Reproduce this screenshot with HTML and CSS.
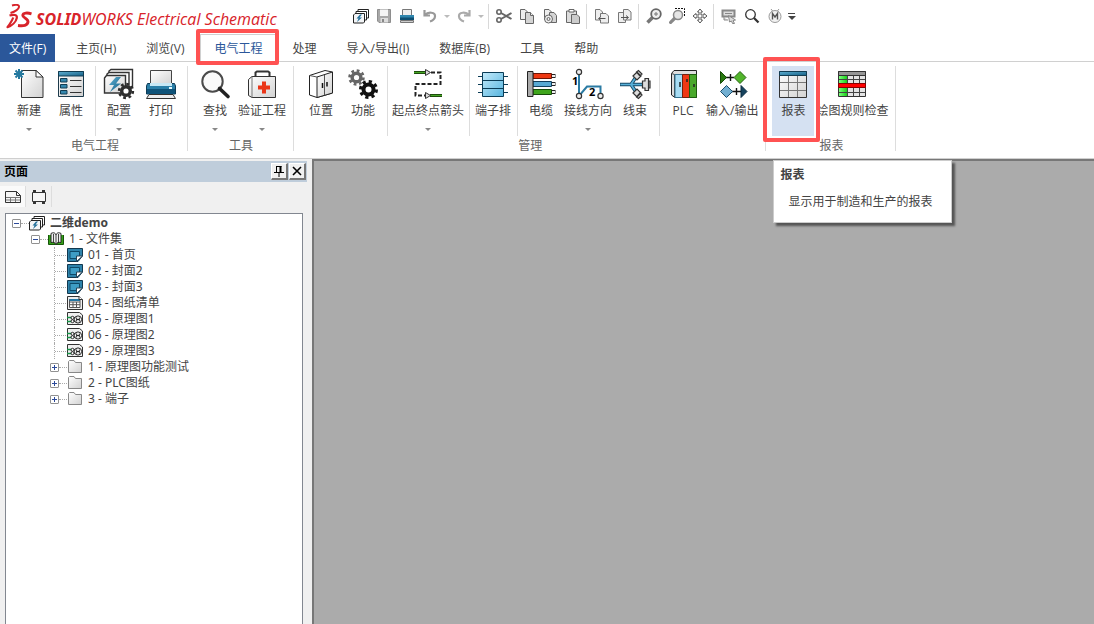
FILE: index.html
```
<!DOCTYPE html>
<html lang="zh-CN">
<head>
<meta charset="utf-8">
<title>SOLIDWORKS Electrical Schematic</title>
<link rel="stylesheet" href="styles.css">
</head>
<body>
<svg class="defs" width="0" height="0" aria-hidden="true">
  <defs>
    <linearGradient id="gPaper" x1="0" y1="0" x2="1" y2="1"><stop offset="0" stop-color="#fff"/><stop offset="1" stop-color="#d2d2d2"/></linearGradient>
    <linearGradient id="gBlue" x1="0" y1="0" x2="1" y2="1"><stop offset="0" stop-color="#5fb0d2"/><stop offset="1" stop-color="#145f86"/></linearGradient>
    <linearGradient id="gSky" x1="0" y1="0" x2="1" y2="1"><stop offset="0" stop-color="#c4ebfb"/><stop offset="1" stop-color="#56b4de"/></linearGradient>
    <linearGradient id="gGreen" x1="0" y1="0" x2="1" y2="0"><stop offset="0" stop-color="#7dff7d"/><stop offset="1" stop-color="#18cf18"/></linearGradient>
    <g id="gear"><circle r="5" fill="none" stroke="currentColor" stroke-width="4"/><circle r="8" fill="none" stroke="currentColor" stroke-width="3" stroke-dasharray="3.2 3.083"/></g>
    <symbol id="project" viewBox="0 0 16 16"><path d="M5 4V1.500H15.500V10H13" fill="#fff" stroke="#222"/><path d="M3 6V3.500H13.500V12H11" fill="#fff" stroke="#222"/><path d="M2 5.500H11.500V14L10.500 15H.5V7Z" fill="#f2f4f6" stroke="#222"/><path d="M7 6.500 3.500 10.500H5.500L4 14 9 9.500H6.500L9 6.500Z" fill="#24709a"/></symbol>
    <symbol id="cover" viewBox="0 0 16 16"><path d="M.5 1.500H15.500V9L11 14.500H.5Z" fill="#2e83ab" stroke="#12384f"/><path d="M3 4.500H12.500V11.500H3Z" fill="#3e9dc5" stroke="#0e4a69"/><path d="M9.500 14.500V9H15.500Z" fill="#fff" stroke="#284457"/></symbol>
    <symbol id="list" viewBox="0 0 16 16"><path d="M.5 1.500H12.500L15.500 4.500V14.500H.5Z" fill="#eee" stroke="#333"/><path d="M2.500 4.500H13V12.500H2.500ZM2.500 7H13M2.500 9.700H13M6 7V12M9.500 7V12" fill="#fff" stroke="#555"/><path d="M2.500 4H13V6H2.500Z" fill="#2577a4"/><path d="M12 1V4.500H15.500" fill="#fff" stroke="#333"/></symbol>
    <symbol id="scheme" viewBox="0 0 16 16"><path d="M.5 1.500H12.500L15.500 4V13.500H.5Z" fill="#f0f0f0" stroke="#333"/><path d="M0 6.500H4M0 10.500H4" stroke="#169447" stroke-width="1.500"/><path d="M4 6.500H9M4 10.500H9" stroke="#333"/><circle cx="5.500" cy="6.800" r="1.500" fill="#fff" stroke="#222"/><circle cx="5.500" cy="10.200" r="1.500" fill="#fff" stroke="#222"/><circle cx="11" cy="8.500" r="3.600" fill="#fff" stroke="#222"/><path d="M9.700 6.500V10.500M12.300 6.500V10.500M9.700 8.500H12.300" stroke="#222"/></symbol>
    <symbol id="folder" viewBox="0 0 16 16"><path d="M1.500 13.500V2.500L2.500 1.500H7L8.500 3.500H14.500V13.500Z" fill="url(#gPaper)" stroke="#888"/></symbol>
  </defs>
</svg>

<header class="titlebar">
  <div class="brand">
    <svg width="28" height="27" viewBox="0 0 28 27" fill="none" stroke="#d8232a" stroke-linejoin="round"><path d="M6 1.500C9 .5 13.500 .3 13 3C12.500 5.500 8.500 7.800 4.500 9" stroke-width="1.900"/><path d="M3.500 11.500C7.500 10.300 11.500 10.500 10.800 14C10 18 6 21.800 1.500 23.200C3.500 20.500 6 17 7.200 13.500" stroke-width="2.200"/><path d="M25.500 9.800C21.500 8.600 17 8.700 16.800 11.300C16.600 13.800 22.500 14.800 22 18C21.500 21.500 17.500 22.300 12 21.500" stroke-width="2.900"/></svg>
    <span class="brand-name"><b>SOLID</b>WORKS <span class="brand-product">Electrical Schematic</span></span>
  </div>
  <div class="quick">
    <button class="q" aria-label="工程"><svg viewBox="0 0 16 16"><use href="#project"/></svg></button>
    <button class="q" aria-label="保存"><svg viewBox="0 0 16 16"><path d="M1.500 1.500H14.500V14.500H3L1.500 13Z" fill="#a8a8a8" stroke="#8e8e8e"/><path d="M4 1.500H12V8H4Z" fill="#f4f4f4"/><path d="M4.500 10H12V14.500H4.500Z" fill="#ddd"/><path d="M6 11H8V14H6Z" fill="#888"/></svg></button>
    <button class="q" aria-label="打印"><svg viewBox="0 0 16 16"><path d="M3.500 1.500H12.500V8H3.500Z" fill="#eee" stroke="#777"/><path d="M1 7H15V12H1Z" fill="#2f86ae"/><path d="M1 9.500H15V12H1Z" fill="#0f4f72"/><path d="M1.500 12.500H14.500V14.500H1.500Z" fill="#ccc" stroke="#777"/></svg></button>
    <button class="q" aria-label="撤销"><svg viewBox="0 0 16 16"><path d="M2.500 2V7.500H8M3 7C6 3.500 13.500 4 13 8.500C12.800 11 11 12.500 8 13.500" fill="none" stroke="#999" stroke-width="2.200"/></svg></button>
    <button class="q arrow muted" aria-label="撤销列表"></button>
    <button class="q" aria-label="重做"><svg viewBox="0 0 16 16"><path d="M13.500 2V7.500H8M13 7C10 3.500 2.500 4 3 8.500C3.200 11 5 12.500 8 13.500" fill="none" stroke="#aaa" stroke-width="2.200"/></svg></button>
    <button class="q arrow muted" aria-label="重做列表"></button>
    <span class="q-sep"></span>
    <button class="q" aria-label="剪切"><svg viewBox="0 0 16 16" fill="none" stroke="#666"><path d="M5 5 15.500 11M5 11 15.500 5" stroke-width="2"/><circle cx="3" cy="4" r="2.200" stroke-width="1.600"/><circle cx="3" cy="12" r="2.200" stroke-width="1.600"/></svg></button>
    <button class="q" aria-label="复制"><svg viewBox="0 0 16 16" fill="#eee" stroke="#666"><path d="M1.500 1.500H6L8.500 4V11.500H1.500Z"/><path d="M6.500 4.500H11.500L14.500 7.500V15.500H6.500Z" fill="#d4d4d4"/><path d="M11.500 4.500V7.500H14.500"/></svg></button>
    <button class="q" aria-label="复合复制"><svg viewBox="0 0 16 16" fill="#eee" stroke="#666"><path d="M2.500 1.500H7L9.500 4V11.500H2.500Z"/><path d="M7.500 4.500H12L14.500 7.500V14.500H7.500Z" fill="#d4d4d4"/><circle cx="6.500" cy="11" r="4"/><circle cx="6.500" cy="11" r="1.500"/></svg></button>
    <button class="q" aria-label="粘贴"><svg viewBox="0 0 16 16" fill="#ddd" stroke="#666"><path d="M1.500 3H11.500V14.500H1.500Z"/><path d="M4 1.500H9V4H4Z" fill="#fff"/><path d="M6.500 6.500H12L14.500 9V15.500H6.500Z" fill="#ccc"/></svg></button>
    <span class="q-sep"></span>
    <button class="q" aria-label="导入"><svg viewBox="0 0 16 16" fill="#eee" stroke="#777"><path d="M1.500 1.500H6L8.500 4V12H1.500Z"/><path d="M6.500 5.500H12L14.500 8V15H6.500Z"/><path d="M11.500 10.500H5M7 8.500 4.500 10.500 7 12.500" stroke="#555"/></svg></button>
    <button class="q" aria-label="导出"><svg viewBox="0 0 16 16" fill="#eee" stroke="#777"><path d="M1.500 4.500H6L8.500 7V14.500H1.500Z"/><path d="M6.500 1.500H11L14 4V12H6.500Z"/><path d="M4 9.500H11M9 7.500 11.500 9.500 9 11.500" stroke="#555"/></svg></button>
    <span class="q-sep"></span>
    <button class="q" aria-label="缩放"><svg viewBox="0 0 16 16" fill="none"><path d="M7 9 1.500 14.500" stroke="#777" stroke-width="3.500"/><circle cx="10" cy="6" r="4.800" stroke="#666" stroke-width="1.800" fill="#eee"/><path d="M8 6H12M10 4V8" stroke="#777"/></svg></button>
    <button class="q" aria-label="窗口缩放"><svg viewBox="0 0 16 16" fill="none"><path d="M6 10 .5 15.500" stroke="#888" stroke-width="3.200"/><circle cx="9" cy="7" r="4.500" stroke="#888" stroke-width="1.500" fill="#e5e5e5"/><path d="M6 .5H15.500V9" stroke="#111" stroke-dasharray="2 1"/></svg></button>
    <button class="q" aria-label="平移"><svg viewBox="0 0 16 16" fill="#fff" stroke="#555"><path d="M8 1 10.500 4H9V7H12V5.500L15 8 12 10.500V9H9V12H10.500L8 15 5.500 12H7V9H4V10.500L1 8 4 5.500V7H7V4H5.500Z"/></svg></button>
    <span class="q-sep"></span>
    <button class="q" aria-label="选择"><svg viewBox="0 0 16 16" fill="#ddd" stroke="#888"><path d="M1.500 2.500H13.500V8.500H1.500Z" stroke-width="2"/><path d="M4 5.500H11"/><path d="M3 9V12H7M7.500 7.500 14.500 12 12 12.500 13.500 15.500 11.500 15.500 10.500 13 8.500 14Z"/></svg></button>
    <button class="q" aria-label="搜索"><svg viewBox="0 0 16 16" fill="none" stroke="#333"><circle cx="6.500" cy="6.500" r="4.800" stroke-width="1.300"/><path d="M10 10 14.500 14.500" stroke-width="2.300"/></svg></button>
    <button class="q" aria-label="宏"><svg viewBox="0 0 16 16" fill="#f2f2f2" stroke="#999"><path d="M4 1 6 3.500M12 1 10 3.500"/><circle cx="8" cy="8.500" r="6"/><path d="M5.500 11.500V5.500L8 9 10.500 5.500V11.500" fill="none" stroke="#555" stroke-width="1.400"/></svg></button>
    <button class="q arrow more" aria-label="自定义"></button>
  </div>
</header>

<nav class="tabs">
  <button class="file">文件(F)</button>
  <button class="tab">主页(H)</button>
  <button class="tab">浏览(V)</button>
  <button class="tab active">电气工程</button>
  <button class="tab">处理</button>
  <button class="tab">导入/导出(I)</button>
  <button class="tab">数据库(B)</button>
  <button class="tab">工具</button>
  <button class="tab">帮助</button>
</nav>

<section class="ribbon">
  <div class="group">
    <div class="tools">
      <button class="tool drop"><svg viewBox="0 0 32 32"><path d="M8.500 2.500H23L30 9V29.500H8.500Z" fill="url(#gPaper)" stroke="#333"/><path d="M23 2.500V9H30Z" fill="#fff" stroke="#333"/><path d="M6 1V11M1 6H11M2.500 2.500 9.500 9.500M9.500 2.500 2.500 9.500" stroke="#24799f" stroke-width="2"/></svg>新建</button>
      <button class="tool"><svg viewBox="0 0 32 32"><path d="M3.500 3.500H28.500V28.500H3.500Z" fill="url(#gPaper)" stroke="#1d3a4b"/><path d="M3.500 3.500H28.500V8H3.500Z" fill="url(#gBlue)" stroke="#123c52"/><path d="M5.500 10.500H12V14H5.500ZM5.500 16.500H12V20H5.500ZM5.500 22.500H12V26H5.500Z" fill="#3487ae" stroke="#123c52"/><path d="M15 12.500H26.500M15 18.500H26.500M15 24.500H26.500" stroke="#333"/></svg>属性</button>
      <span class="sep"></span>
      <button class="tool drop"><svg viewBox="0 0 32 32"><path d="M6 5V3L8 1.500H29.500V19H26" fill="#fff" stroke="#333" stroke-width="1.400"/><path d="M4 8V6L6 4.500H26V22H22" fill="#fff" stroke="#333" stroke-width="1.400"/><path d="M1.500 10 3.500 7.500H22.500V25H1.500Z" fill="url(#gPaper)" stroke="#333" stroke-width="1.400"/><path d="M13 9 6 17H11L7 24 18 15.500H13L18 9Z" fill="url(#gBlue)"/><circle cx="23" cy="23" r="5" fill="#fff"/><use href="#gear" transform="translate(23 23) scale(.86)" color="#2d2d2d"/></svg>配置</button>
      <button class="tool"><svg viewBox="0 0 32 32"><path d="M5.500 2.500H26.500V17H5.500Z" fill="url(#gPaper)" stroke="#444"/><path d="M2.500 15.500H29.500L30.500 18V26H1.500V18Z" fill="#2a7fa8" stroke="#0e3d58"/><path d="M5 15H27V18H5Z" fill="#c8e8f5"/><path d="M2 21H30V26H2Z" fill="#0f5379"/><path d="M24 19H27V21H24Z" fill="#e8fbff"/><path d="M4 26.500H28L30.500 30.500H1.500Z" fill="#eee" stroke="#333"/></svg>打印</button>
    </div>
    <div class="group-name">电气工程</div>
  </div>

  <div class="group">
    <div class="tools">
      <button class="tool drop"><svg viewBox="0 0 32 32"><circle cx="13.500" cy="13.500" r="10.200" fill="#fafafa" stroke="#4b4b4b" stroke-width="2"/><path d="M20.500 20.500 29 28.500" stroke="#222" stroke-width="3.600" stroke-linecap="round"/></svg>查找</button>
      <button class="tool drop"><svg viewBox="0 0 32 32"><path d="M9.500 9V4.500L11 3.500H22L23.500 4.500V9" fill="none" stroke="#333" stroke-width="2"/><path d="M2.500 11.500 6 8.500H29.500V29.500H6L2.500 27.500Z" fill="url(#gPaper)" stroke="#333"/><path d="M6 8.500V29.500" stroke="#777"/><path d="M16 13.500H20V17.500H24V21.500H20V25.500H16V21.500H12V17.500H16Z" fill="#ea3517"/></svg>验证工程</button>
    </div>
    <div class="group-name">工具</div>
  </div>

  <div class="group">
    <div class="tools">
      <button class="tool"><svg viewBox="0 0 32 32"><path d="M4.500 7.500 20 2.500 27.500 4V25L12 29.500 4.500 27Z" fill="#fff" stroke="#222"/><path d="M12 9 27.500 4V25L12 29.500Z" fill="url(#gPaper)" stroke="#222"/><path d="M4.500 7.500 12 9M19.500 7V27" stroke="#555" fill="none"/><path d="M17.500 15V20M22 14V18.500" stroke="#111" stroke-width="1.500"/></svg>位置</button>
      <button class="tool"><svg viewBox="0 0 32 32"><use href="#gear" transform="translate(9.500 9.500) scale(.87)" color="#666"/><use href="#gear" transform="translate(21.500 21.500)" color="#111"/></svg>功能</button>
      <span class="sep"></span>
      <button class="tool drop"><svg viewBox="0 0 32 32"><path d="M2 4.500H14M18 27.500H30" stroke="#1d4d0c" stroke-width="3"/><path d="M2 4.500H14M18 27.500H30" stroke="#45a524"/><path d="M19 4.500H28.500V16H3.500V27.500H13" fill="none" stroke="#222" stroke-width="2" stroke-dasharray="4 2"/><path d="M13.500 1.500 18.500 4.500 13.500 7.500ZM13.500 24.500 18.500 27.500 13.500 30.500Z" fill="#ddd" stroke="#333"/></svg>起点终点箭头</button>
      <span class="sep"></span>
      <button class="tool"><svg viewBox="0 0 32 32"><path d="M1 8.500H31M1 16.500H31M1 24.500H31" stroke="#0b3d57"/><path d="M5.500 4.500H26.500V28.500H5.500Z" fill="url(#gSky)" stroke="#0b3d57"/><path d="M5.500 12.500H26.500M5.500 20.500H26.500" stroke="#0b3d57"/></svg>端子排</button>
      <span class="sep"></span>
      <button class="tool"><svg viewBox="0 0 32 32"><path d="M26 8H30.500M26 16H30.500M26 24H30.500" stroke="#222" stroke-width="4"/><path d="M27 8H30M27 16H30M27 24H30" stroke="#eee" stroke-width="2"/><path d="M8 5.500H26.500V10.500H8Z" fill="#ee3812" stroke="#6d1505"/><path d="M8 13.500H26.500V18.500H8Z" fill="#58a9d3" stroke="#123e5c"/><path d="M8 21.500H26.500V26.500H8Z" fill="#3fa51c" stroke="#164b08"/><path d="M2.500 3.500H8V28.500H2.500Z" fill="#aaa" stroke="#222"/></svg>电缆</button>
      <button class="tool drop"><svg viewBox="0 0 32 32"><path d="M7 4V28L15 18.500H28.500V28" fill="none" stroke="#2b7ba3" stroke-width="2"/><g fill="#eee" stroke="#333" stroke-width="1.200"><circle cx="7" cy="4" r="2.600"/><circle cx="7" cy="28" r="2.600"/><circle cx="28.500" cy="28" r="2.600"/></g><text class="wire-no" x="0" y="17">1</text><text class="wire-no" x="17" y="28">2</text></svg>接线方向</button>
      <button class="tool"><svg viewBox="0 0 32 32"><path d="M1 16.500H24M12 16.500 17 9M12 16.500 17 24" fill="none" stroke="#174a66" stroke-width="3.500"/><path d="M1.500 16.500H24M12 16.500 17 9M12 16.500 17 24" fill="none" stroke="#58b0d9" stroke-width="1.700"/><g fill="#ddd" stroke="#333" stroke-width="1.200"><path d="M14 8 18 4 22 8 18 12ZM17.500 4 19.500 2.500 23 6 21 8ZM14 25 18 21 22 25 18 29ZM17.500 29 19.500 30.500 23 27 21 25Z"/><path d="M23.500 13H26V10.500H29.500V22.500H26V20H23.500ZM29.500 13H31V20H29.500Z"/></g></svg>线束</button>
      <span class="sep"></span>
      <button class="tool"><svg viewBox="0 0 32 32"><path d="M4.500 5.500 7 2.500H29.500V29.500H8L4.500 27Z" fill="#ddd" stroke="#222"/><path d="M4.500 5.500 7.500 6.500V29" fill="none" stroke="#444"/><path d="M8 6.500H15.500V29.500H8Z" fill="#a7dcf3" stroke="#34718e"/><path d="M15.500 6.500H22.500V29.500H15.500Z" fill="#ee3815" stroke="#74200e"/><path d="M22.500 6.500H29.500V29.500H22.500Z" fill="#49a82b" stroke="#1d5c0e"/><path d="M13 14V19M20 11V14M27 16V19" stroke="#222" stroke-width="1.500"/></svg>PLC</button>
      <button class="tool"><svg viewBox="0 0 32 32"><path d="M10 9.500H18M14.500 6V13M16 23.500H25M20.500 20V27" stroke="#111" stroke-width="1.400"/><path d="M4.500 3.500V15.500L10.500 9.500Z" fill="#27780e" stroke="#154a05"/><path d="M24 3.500 30 9.500 24 15.500 18 9.500Z" fill="#52b52c" stroke="#23630f"/><path d="M10.500 17.500 16.500 23.500 10.500 29.500 4.500 23.500Z" fill="#72afd2" stroke="#1b4d6c"/><path d="M25 17.500V29.500L31 23.500Z" fill="#16435e" stroke="#082b40"/></svg>输入/输出</button>
    </div>
    <div class="group-name">管理</div>
  </div>

  <div class="group">
    <div class="tools">
      <div class="tool-wrap">
        <button class="tool current" aria-describedby="tip"><svg viewBox="0 0 32 32"><path d="M2.500 3.500H29.500V29.500H2.500Z" fill="url(#gPaper)" stroke="#333"/><path d="M2.500 3.500H29.500V7.500H2.500Z" fill="url(#gBlue)" stroke="#123c52"/><path d="M3 14.500H29M3 22.500H29M11.500 8V29M20.500 8V29" stroke="#777"/></svg>报表</button>
        <div class="tooltip" id="tip" role="tooltip"><strong>报表</strong><p>显示用于制造和生产的报表</p></div>
      </div>
      <button class="tool"><svg viewBox="0 0 32 32"><path d="M2.500 3.500H29.500V28.500H2.500Z" fill="#e4e4e4" stroke="#333"/><path d="M2.500 3.500H29.500V7.500H2.500Z" fill="#969696" stroke="#333"/><path d="M3 8H11V28H3Z" fill="url(#gGreen)"/><path d="M3 11.500H29M3 24.500H29M11.500 8V28M17.500 8V28M23.500 8V28" stroke="#444"/><path d="M2.500 15.500H29.500V19.500H2.500Z" fill="#f00" stroke="#800"/></svg>绘图规则检查</button>
    </div>
    <div class="group-name">报表</div>
  </div>
</section>

<main class="work">
  <aside class="panel">
    <div class="panel-head">
      <h2>页面</h2>
      <button class="win" aria-label="固定"><svg viewBox="0 0 12 12"><path d="M3.500 1V7M3 1.500H8.500M1 7.500H11M6 8V12" stroke="#000" fill="none"/><path d="M7.500 1V7" stroke="#000" stroke-width="2"/></svg></button>
      <button class="win" aria-label="关闭"><svg viewBox="0 0 12 12"><path d="M2 2 10 10M10 2 2 10" stroke="#000" stroke-width="1.600"/></svg></button>
    </div>
    <div class="views">
      <button class="view on" aria-label="页面"><svg viewBox="0 0 16 16"><path d="M.5 2.500H11.500L15.500 6.500V13.500H.5Z" fill="#f6f6f6" stroke="#333"/><path d="M11.500 2.500V6.500H15.500" fill="none" stroke="#333"/><path d="M1 8.500H15M1 11H15M5.500 8V13M10.500 8V13" stroke="#777"/></svg></button>
      <button class="view" aria-label="设备"><svg viewBox="0 0 16 16"><path d="M1.500 3.500H14.500V12.500H1.500Z" fill="#f6f6f6" stroke="#333"/><path d="M2 2H5M11 2H14M2 14H5M11 14H14" stroke="#333" stroke-width="2"/></svg></button>
    </div>
    <div class="tree">
      <ul>
        <li>
          <div class="row root"><button class="twist" aria-label="折叠"></button><span class="dots"></span><svg viewBox="0 0 16 16"><use href="#project"/></svg><span>二维demo</span></div>
          <ul>
            <li>
              <div class="row"><button class="twist" aria-label="折叠"></button><span class="dots"></span><svg viewBox="0 0 16 16"><path d="M.5 4V13.500H15.500V4" fill="#34a018" stroke="#16540a"/><path d="M8 13.500C7 11.500 5.500 11 3 11.500V2.500C5.500 1 7.500 2 8 4C8.500 2 10.500 1 13 2.500V11.500C10.500 11 9 11.500 8 13.500Z" fill="#eee" stroke="#222"/><path d="M8 4V13M5.500 3V11M10.500 3V11" stroke="#444"/></svg><span>1 - 文件集</span></div>
              <ul class="pages">
                <li class="row"><span class="branch"></span><svg viewBox="0 0 16 16"><use href="#cover"/></svg><span>01 - 首页</span></li>
                <li class="row"><span class="branch"></span><svg viewBox="0 0 16 16"><use href="#cover"/></svg><span>02 - 封面2</span></li>
                <li class="row"><span class="branch"></span><svg viewBox="0 0 16 16"><use href="#cover"/></svg><span>03 - 封面3</span></li>
                <li class="row"><span class="branch"></span><svg viewBox="0 0 16 16"><use href="#list"/></svg><span>04 - 图纸清单</span></li>
                <li class="row"><span class="branch"></span><svg viewBox="0 0 16 16"><use href="#scheme"/></svg><span>05 - 原理图1</span></li>
                <li class="row"><span class="branch"></span><svg viewBox="0 0 16 16"><use href="#scheme"/></svg><span>06 - 原理图2</span></li>
                <li class="row"><span class="branch"></span><svg viewBox="0 0 16 16"><use href="#scheme"/></svg><span>29 - 原理图3</span></li>
                <li class="row"><button class="twist closed" aria-label="展开"></button><span class="dots"></span><svg viewBox="0 0 16 16"><use href="#folder"/></svg><span>1 - 原理图功能测试</span></li>
                <li class="row"><button class="twist closed" aria-label="展开"></button><span class="dots"></span><svg viewBox="0 0 16 16"><use href="#folder"/></svg><span>2 - PLC图纸</span></li>
                <li class="row"><button class="twist closed" aria-label="展开"></button><span class="dots"></span><svg viewBox="0 0 16 16"><use href="#folder"/></svg><span>3 - 端子</span></li>
              </ul>
            </li>
          </ul>
        </li>
      </ul>
    </div>
  </aside>
  <div class="canvas"></div>
</main>
</body>
</html>
```
FILE: styles.css
```
* { box-sizing: border-box; }

body {
  margin: 0;
  min-height: 100vh;
  display: flex;
  flex-direction: column;
  background: #fff;
  color: #444;
  font: 12px/16px "Open Sans", "Noto Sans CJK SC", sans-serif;
}

button {
  margin: 0;
  padding: 0;
  border: 0;
  background: none;
  color: inherit;
  font: inherit;
  white-space: nowrap;
}

.defs { position: absolute; }

/* Title bar */
.titlebar { display: flex; height: 34px; }
.brand { display: flex; flex: 0 0 349px; gap: 2px; padding: 4px 0 0 6px; }
.brand-name {
  color: #d8232a;
  font: italic 16px/31px "Noto Sans", sans-serif;
  white-space: nowrap;
}
.brand-product { font-family: "Open Sans", sans-serif; }
.quick { display: flex; align-items: center; height: 32px; }
.q { display: flex; align-items: center; justify-content: center; width: 23px; height: 22px; }
.q svg { width: 16px; height: 16px; }
.q-sep { width: 1px; height: 25px; margin: 0 3px 0 2px; background: #d9d9d9; }
.q.arrow { width: 11px; }
.arrow::after {
  content: "";
  border: 3px solid transparent;
  border-top-color: #777;
  border-bottom: 0;
}
.arrow.muted::after { border-top-color: #bbb; }
.arrow.more { flex-direction: column; gap: 2px; }
.arrow.more::before { content: ""; width: 7px; height: 1px; background: #444; }
.arrow.more::after { border-width: 4px 4px 0; border-top-color: #444; }

/* Menu tabs */
.tabs { display: flex; gap: 2px; height: 28px; border-bottom: 1px solid #d0d0d0; }
.file { height: 28px; margin-right: 5px; padding: 1px 9px 0; background: #2b579a; color: #fff; }
.tab { position: relative; padding: 2px 14px 0; }
.tab.active {
  height: 28px;
  padding-top: 1px;
  background: #fff;
  color: #2b579a;
  box-shadow: inset 1px 1px #d0d0d0, inset -1px 0 #d0d0d0;
}
.tab.active::after,
.current::before {
  content: "";
  position: absolute;
  z-index: 2;
  border: 4px solid #ff5252;
  border-radius: 2px;
}
.tab.active::after { inset: -5px -3px -3px -4px; }

/* Ribbon */
.ribbon { display: flex; height: 97px; padding: 4px 0 0 2px; border-bottom: 1px solid #cfcfcf; }
.group {
  padding: 0 5px 0 6px;
  background: linear-gradient(#ddd, #ddd) right top / 1px 85px no-repeat;
  background-origin: border-box;
  border-right: 1px solid transparent;
}
.tools { display: flex; height: 70px; }
.tool {
  position: relative;
  display: flex;
  flex-direction: column;
  align-items: center;
  min-width: 42px;
  height: 70px;
  padding: 2px 2px 0;
}
.tool svg { width: 32px; height: 32px; margin-bottom: 3px; }
.tool.drop::after {
  content: "";
  margin-top: 9px;
  border: 3px solid transparent;
  border-top-color: #888;
  border-bottom: 0;
}
.tool-wrap { position: relative; z-index: 1; }
.current { background: #d5e1f2; }
.current::before { inset: -9px -6px -6px -9px; }
.sep { width: 1px; margin: 0 2px 0 3px; background: #ddd; }
.group-name { margin-top: 2px; color: #666; text-align: center; }
.wire-no { font: bold 11px "Open Sans", sans-serif; fill: #000; }

.tooltip {
  position: absolute;
  z-index: 3;
  top: 94px;
  left: 1px;
  padding: 6px 19px 12px 6px;
  background: #fff;
  border: 1px solid #ccc;
  box-shadow: 3px 3px 2px #555;
  white-space: nowrap;
}
.tooltip strong { display: block; }
.tooltip p { margin: 11px 0 0 8px; }

/* Work area */
.work { display: flex; flex: 1; }
.panel { display: flex; flex: 0 0 312px; flex-direction: column; padding-top: 2px; background: #f0f0f0; }
.panel-head { display: flex; align-items: center; gap: 1px; height: 21px; margin-right: 5px; padding: 0 1px 0 4px; background: #bfcddb; }
.panel-head h2 { flex: 1; margin: 0; color: #000; font-size: 12px; line-height: 20px; }
.win {
  display: flex;
  align-items: center;
  justify-content: center;
  width: 17px;
  height: 17px;
  background: #f0f0f0;
  border: 1px solid #fff;
  border-right: 2px solid #777;
  border-bottom: 2px solid #777;
}
.win svg { width: 12px; height: 12px; }
.views { display: flex; height: 31px; padding-top: 4px; }
.view { display: flex; align-items: center; justify-content: center; width: 26px; height: 21px; border-right: 1px solid #ddd; }
.view.on { background: #fafafa; }
.view svg { width: 16px; height: 16px; }

.tree {
  flex: 1;
  margin: 0 9px 0 5px;
  padding: 1px 6px;
  background: #fff;
  border: 1px solid #828790;
  border-bottom: 0;
  font-family: "Noto Sans", "Noto Sans CJK SC", sans-serif;
}
.tree ul { margin: 0; padding: 0; list-style: none; }
.tree ul ul { padding-left: 19px; }
.row { display: flex; align-items: center; height: 16px; white-space: nowrap; }
.row.root { font-weight: bold; }
.row svg { width: 16px; height: 16px; margin-right: 5px; }
.twist {
  width: 9px;
  height: 9px;
  background:
    linear-gradient(#2c4a9a, #2c4a9a) center / 5px 1px no-repeat,
    #fff;
  border: 1px solid #919191;
  border-radius: 1px;
}
.twist.closed {
  background:
    linear-gradient(#2c4a9a, #2c4a9a) center / 5px 1px no-repeat,
    linear-gradient(#2c4a9a, #2c4a9a) center / 1px 5px no-repeat,
    #fff;
}
.dots { width: 8px; border-top: 1px dotted #aaa; }
.branch {
  width: 13px;
  height: 16px;
  margin-left: 4px;
  border-left: 1px dotted #aaa;
  background: repeating-linear-gradient(90deg, #aaa 0 1px, transparent 1px 2px) left center / 100% 1px no-repeat;
}

.canvas {
  flex: 1;
  background: #ababab;
  border-top: 2px solid #777;
  border-left: 2px solid #777;
}
```
